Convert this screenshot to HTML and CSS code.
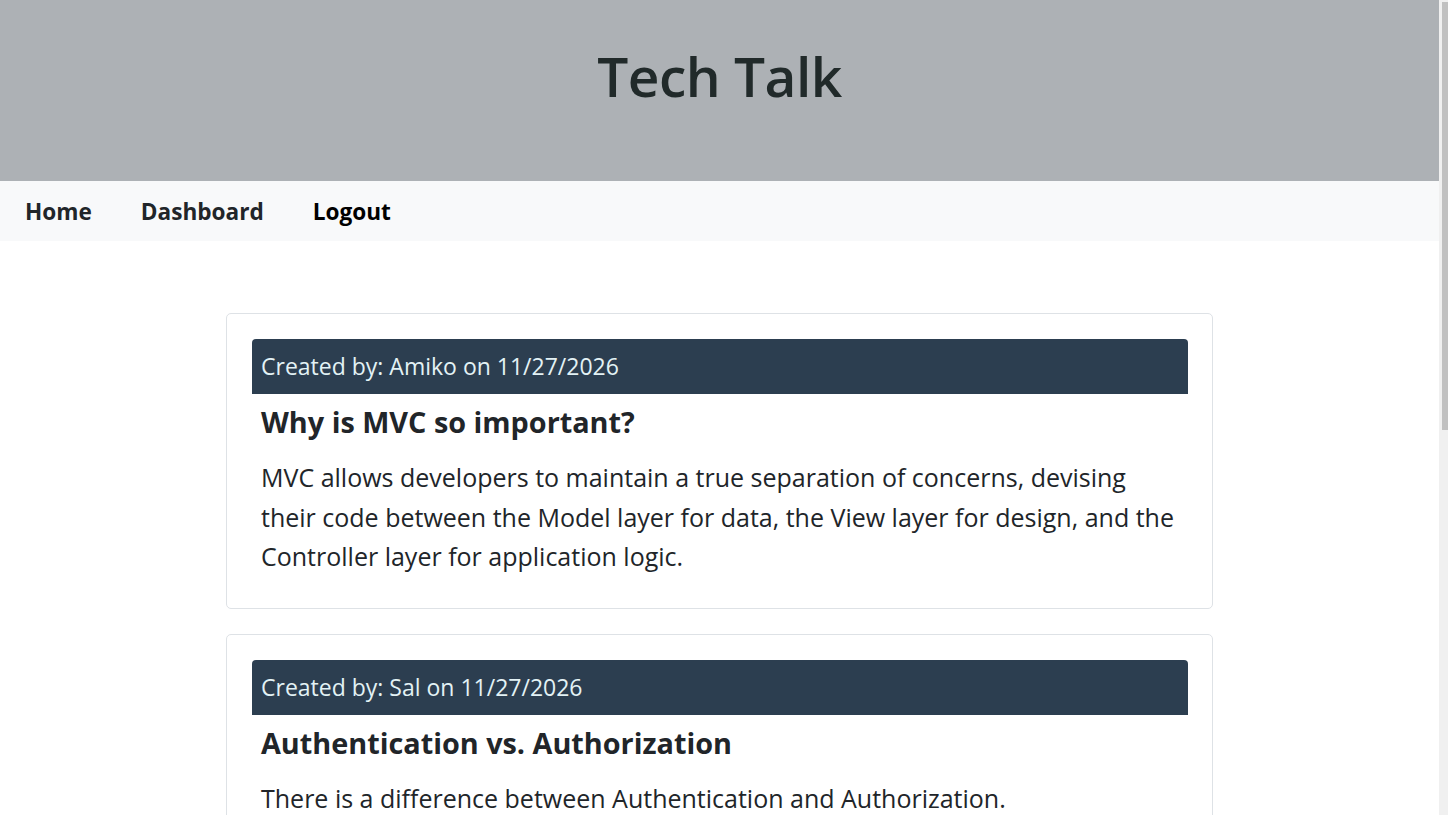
FILE: index.html
```html
<!DOCTYPE html>
<html lang="en">
<head>
<meta charset="utf-8">
<title>Tech Talk</title>
<link rel="stylesheet" href="styles.css">
</head>
<body>
<div class="page">
<header class="site-header">
  <h1 class="site-title">Tech Talk</h1>
</header>
<nav class="site-nav">
  <a class="nav-link" href="#">Home</a>
  <a class="nav-link" href="#">Dashboard</a>
  <a class="nav-link nav-link-dark" href="#">Logout</a>
</nav>
<main class="posts">
  <article class="post-card">
    <div class="post-header">Created by: Amiko on 11/27/2026</div>
    <h2 class="post-title">Why is MVC so important?</h2>
    <p class="post-body">MVC allows developers to maintain a true separation of concerns, devising their code between the Model layer for data, the View layer for design, and the Controller layer for application logic.</p>
  </article>
  <article class="post-card">
    <div class="post-header">Created by: Sal on 11/27/2026</div>
    <h2 class="post-title">Authentication vs. Authorization</h2>
    <p class="post-body">There is a difference between Authentication and Authorization.<br>Authentication means confirming your own identity, whereas authorization means being allowed access to the system.</p>
  </article>
</main>
</div>
<div class="scrollbar" aria-hidden="true"><div class="scrollbar-thumb"></div></div>
</body>
</html>
```

FILE: styles.css
```css
html, body {
  margin: 0;
  height: 100%;
  overflow: hidden;
}
body {
  display: flex;
  font-family: "Open Sans", "Noto Sans", sans-serif;
  color: #212529;
  background: #fff;
}
.page {
  flex: 1;
  min-width: 0;
  height: 100vh;
  overflow: hidden;
}
.scrollbar {
  width: 9px;
  flex: none;
  height: 100vh;
  background: #f0f0f0;
  border-left: 1px solid #f0f0f0;
  padding: 2px 0 0 2px;
  box-sizing: border-box;
}
.scrollbar-thumb {
  height: 428px;
  background: #c1c1c1;
}
.site-header {
  background: #adb1b5;
  height: 181px;
  display: flex;
  align-items: center;
  justify-content: center;
}
.site-title {
  margin: 0;
  font-size: 55px;
  font-weight: 600;
  color: #212a2a;
  letter-spacing: -0.5px;
  padding-bottom: 30px;
}
.site-nav {
  background: #f8f9fa;
  height: 60px;
  display: flex;
  align-items: center;
  padding-left: 25px;
  gap: 49px;
}
.nav-link {
  font-size: 22.6px;
  font-weight: 700;
  color: #212529;
  text-decoration: none;
}
.nav-link-dark {
  color: #000;
}
.posts {
  max-width: 987px;
  margin: 72px auto 0;
  padding-bottom: 40px;
  display: flex;
  flex-direction: column;
  gap: 25px;
}
.post-card {
  border: 1px solid #dee2e6;
  border-radius: 5px;
  padding: 25px 24px 13px 25px;
}
.post-header {
  background: #2c3e50;
  color: #e3f2f5;
  font-size: 23px;
  line-height: 33px;
  padding: 11px 9px;
  border-radius: 4px 4px 0 0;
}
.post-title {
  margin: 8px 9px 0;
  font-size: 28.8px;
  font-weight: 700;
  line-height: 40px;
}
.post-body {
  margin: 16px 9px 18px;
  font-size: 25px;
  line-height: 39.5px;
}
```
